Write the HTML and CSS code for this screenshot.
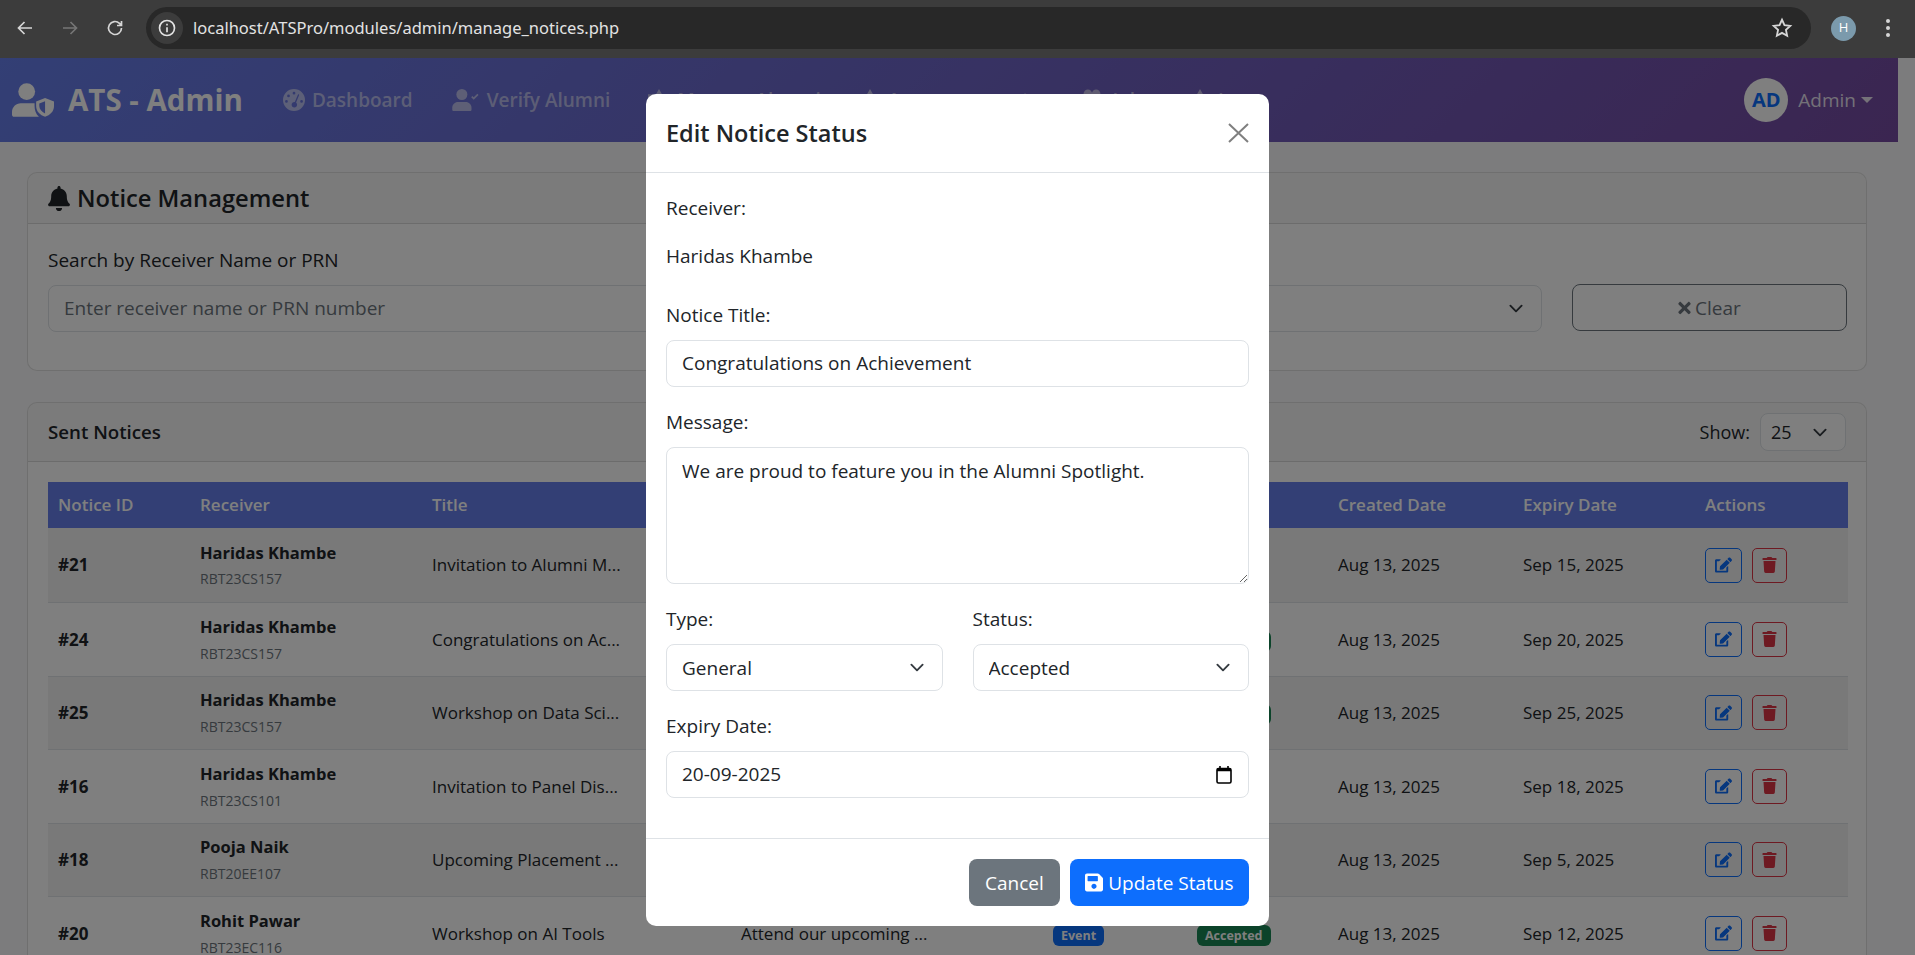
FILE: index.html
```html
<!DOCTYPE html>
<html lang="en">
<head>
  <meta charset="UTF-8">
  <title>Manage Notices - ATS Admin</title>
  <link rel="stylesheet" href="styles.css">
</head>
<body>
  <svg class="sprite" aria-hidden="true">
    <symbol id="i-bell" viewBox="0 0 448 512"><path d="M224 512c35.32 0 63.97-28.65 63.97-64H160.03c0 35.35 28.65 64 63.97 64zm215.39-149.71c-19.32-20.76-55.47-51.99-55.47-154.29 0-77.7-54.48-139.9-127.94-155.16V32c0-17.67-14.32-32-31.98-32s-31.98 14.33-31.98 32v20.84C118.56 68.1 64.08 130.3 64.08 208c0 102.3-36.15 133.53-55.47 154.29-6 6.45-8.66 14.16-8.61 21.71.11 16.4 12.98 32 32.1 32h383.8c19.12 0 32-15.6 32.1-32 .05-7.55-2.61-15.27-8.61-21.71z"/></symbol>
    <symbol id="i-trash" viewBox="0 0 448 512"><path d="M432 32H312l-9.4-18.7A24 24 0 0 0 281.1 0H166.8a23.72 23.72 0 0 0-21.4 13.3L136 32H16A16 16 0 0 0 0 48v32a16 16 0 0 0 16 16h416a16 16 0 0 0 16-16V48a16 16 0 0 0-16-16zM53.2 467a48 48 0 0 0 47.9 45h245.8a48 48 0 0 0 47.9-45L416 128H32z"/></symbol>
    <symbol id="i-edit" viewBox="0 0 576 512"><path d="M402.6 83.2l90.2 90.2c3.8 3.8 3.8 10 0 13.8L274.4 405.6l-92.8 10.3c-12.4 1.4-22.9-9.1-21.5-21.5l10.3-92.8L388.8 83.2c3.8-3.8 10-3.8 13.8 0zm162-22.9l-48.8-48.8c-15.2-15.2-39.9-15.2-55.2 0l-35.4 35.4c-3.8 3.8-3.8 10 0 13.8l90.2 90.2c3.8 3.8 10 3.8 13.8 0l35.4-35.4c15.2-15.3 15.2-40 0-55.2zM384 346.2V448H64V128h73.1c3.2 0 6.2-1.3 8.5-3.5l40-40c7.6-7.6 2.2-20.5-8.5-20.5H48C21.5 64 0 85.5 0 112v352c0 26.5 21.5 48 48 48h352c26.5 0 48-21.5 48-48V306.2c0-10.7-12.9-16-20.5-8.5l-40 40c-2.2 2.3-3.5 5.3-3.5 8.5z"/></symbol>
    <symbol id="i-save" viewBox="0 0 448 512"><path d="M433.941 129.941l-83.882-83.882A48 48 0 0 0 316.118 32H48C21.49 32 0 53.49 0 80v352c0 26.51 21.49 48 48 48h352c26.51 0 48-21.49 48-48V163.882a48 48 0 0 0-14.059-33.941zM224 416c-35.346 0-64-28.654-64-64 0-35.346 28.654-64 64-64s64 28.654 64 64c0 35.346-28.654 64-64 64zm96-304.52V212c0 6.627-5.373 12-12 12H76c-6.627 0-12-5.373-12-12V108c0-6.627 5.373-12 12-12h228.52c3.183 0 6.235 1.264 8.485 3.515l3.48 3.48A11.996 11.996 0 0 1 320 111.48z"/></symbol>
    <symbol id="i-times" viewBox="0 0 352 512"><path d="M242.72 256l100.07-100.07c12.28-12.28 12.28-32.19 0-44.48l-22.24-22.24c-12.28-12.28-32.19-12.28-44.48 0L176 189.28 75.93 89.21c-12.28-12.28-32.19-12.28-44.48 0L9.21 111.45c-12.28 12.28-12.28 32.19 0 44.48L109.28 256 9.21 356.07c-12.28 12.28-12.28 32.19 0 44.48l22.24 22.24c12.28 12.28 32.2 12.28 44.48 0L176 322.72l100.07 100.07c12.28 12.28 32.2 12.28 44.48 0l22.24-22.24c12.28-12.28 12.28-32.19 0-44.48L242.72 256z"/></symbol>
    <symbol id="i-gauge" viewBox="0 0 512 512"><path fill-rule="evenodd" d="M256 0a256 256 0 1 0 0 512 256 256 0 0 0 0-512zm0 64a32 32 0 1 1 0 64 32 32 0 0 1 0-64zM128 128a32 32 0 1 1 0 64 32 32 0 0 1 0-64zM80 256a32 32 0 1 1 0 64 32 32 0 0 1 0-64zm352 0a32 32 0 1 1 0 64 32 32 0 0 1 0-64zM361 115c12 5 18 19 13 31l-70 170c14 12 24 30 24 52 0 36-29 64-64 64s-64-28-64-64 29-64 64-64c4 0 7 0 10 1l70-168c5-12 19-18 31-13z"/></symbol>
    <symbol id="i-user-shield" viewBox="0 0 640 512"><circle cx="224" cy="128" r="128"/><path d="M134 304h180c10 0 20 1 30 3v40c0 60 18 120 66 165H32c-18 0-32-14-32-32v-42c0-74 60-134 134-134z"/><path fill-rule="evenodd" d="M504 224l136 54v70c0 84-60 140-136 164-76-24-136-80-136-164v-70zm0 50l-88 35v40c0 50 36 90 88 112z"/></symbol>
    <symbol id="i-user-check" viewBox="0 0 640 512"><circle cx="224" cy="128" r="128"/><path d="M134 304h180c74 0 134 60 134 134v42c0 18-14 32-32 32H32c-18 0-32-14-32-32v-42c0-74 60-134 134-134z"/><path d="M500 250l-60-60 28-28 32 32 84-84 28 28z"/></symbol>
    <symbol id="i-users" viewBox="0 0 512 512"><circle cx="160" cy="110" r="100"/><circle cx="352" cy="110" r="100"/><path d="M0 480c0-120 70-200 160-200s160 80 160 200zm340-200c100 0 172 80 172 200H360c0-80-20-150-60-190z"/></symbol>
    <symbol id="i-peak" viewBox="0 0 512 512"><path d="M256 0l70 120h186v392H0V120h186z"/></symbol>
  </svg>

  <header class="browser-bar">
    <svg class="tool-icon" viewBox="0 0 24 24"><path d="M19 12H6M11.500 6l-6 6 6 6"/></svg>
    <svg class="tool-icon tool-off" viewBox="0 0 24 24"><path d="M5 12h13M12.500 6l6 6-6 6"/></svg>
    <svg class="tool-icon" viewBox="0 0 24 24"><path d="M18.500 12a6.500 6.500 0 1 1-2-4.700L18.500 9.300M18.500 5v4.500H14"/></svg>
    <div class="omnibox">
      <span class="site-info">
        <svg viewBox="0 0 24 24"><circle cx="12" cy="12" r="9"/><path d="M12 11v6M12 7v2"/></svg>
      </span>
      <span class="url">localhost/ATSPro/modules/admin/manage_notices.php</span>
      <svg class="star" viewBox="0 0 24 24"><path d="M12 3l2.700 6 6.300.7-4.700 4.300 1.300 6.500L12 17.300l-5.600 3.200 1.300-6.500L3 9.700l6.300-.7z"/></svg>
    </div>
    <span class="profile-dot">H</span>
    <span class="menu-dots"><i></i><i></i><i></i></span>
  </header>

  <div class="viewport">
    <div class="page">
      <nav class="navbar">
        <a class="brand" href="#"><svg class="brand-icon"><use href="#i-user-shield"/></svg>ATS - Admin</a>
        <ul class="nav-links">
          <li><svg class="nav-icon"><use href="#i-gauge"/></svg>Dashboard</li>
          <li><svg class="nav-icon nav-icon-wide"><use href="#i-user-check"/></svg>Verify Alumni</li>
          <li><svg class="nav-icon"><use href="#i-peak"/></svg>Manage Alumni</li>
          <li><svg class="nav-icon"><use href="#i-peak"/></svg>Announcements</li>
          <li><svg class="nav-icon nav-icon-wide"><use href="#i-users"/></svg>Jobs</li>
          <li><svg class="nav-icon"><use href="#i-peak"/></svg>Logs</li>
        </ul>
        <div class="nav-user">
          <span class="avatar">AD</span>
          <span class="user-name">Admin</span>
          <span class="caret"></span>
        </div>
      </nav>

      <main class="content">
        <section class="card filter-card">
          <div class="card-head">
            <h4 class="card-title"><svg class="bell"><use href="#i-bell"/></svg>Notice Management</h4>
          </div>
          <div class="filter-body">
            <div class="filter-col">
              <label class="field-label">Search by Receiver Name or PRN</label>
              <input class="control" type="text" placeholder="Enter receiver name or PRN number">
            </div>
            <div class="filter-col">
              <label class="field-label">Filter by Status</label>
              <select class="control"><option></option></select>
            </div>
            <div class="filter-clear">
              <button class="btn-clear" type="button"><svg><use href="#i-times"/></svg>Clear</button>
            </div>
          </div>
        </section>

        <section class="card notices-card">
          <div class="card-head notices-head">
            <h5 class="sub-title">Sent Notices</h5>
            <div class="show-box">
              <span>Show:</span>
              <select class="control control-small"><option>25</option></select>
            </div>
          </div>
          <div class="notices-body">
            <table class="notices">
              <colgroup>
                <col class="c-id"><col class="c-receiver"><col class="c-title"><col class="c-message">
                <col class="c-type"><col class="c-status"><col class="c-created"><col class="c-expiry"><col class="c-actions">
              </colgroup>
              <thead>
                <tr>
                  <th>Notice ID</th><th>Receiver</th><th>Title</th><th>Message</th><th>Type</th>
                  <th>Status</th><th>Created Date</th><th>Expiry Date</th><th>Actions</th>
                </tr>
              </thead>
              <tbody>
                <tr>
                  <td class="id">#21</td>
                  <td><b class="name">Haridas Khambe</b><small class="prn">RBT23CS157</small></td>
                  <td>Invitation to Alumni M...</td>
                  <td>You are invited to our ...</td>
                  <td><span class="badge b-event">Event</span></td>
                  <td><span class="badge b-read">Read</span></td>
                  <td>Aug 13, 2025</td><td>Sep 15, 2025</td>
                  <td class="actions"><button class="act act-edit"><svg><use href="#i-edit"/></svg></button><button class="act act-del"><svg><use href="#i-trash"/></svg></button></td>
                </tr>
                <tr>
                  <td class="id">#24</td>
                  <td><b class="name">Haridas Khambe</b><small class="prn">RBT23CS157</small></td>
                  <td>Congratulations on Ac...</td>
                  <td>We are proud to featu...</td>
                  <td><span class="badge b-event">General</span></td>
                  <td><span class="badge b-accepted">Accepted</span></td>
                  <td>Aug 13, 2025</td><td>Sep 20, 2025</td>
                  <td class="actions"><button class="act act-edit"><svg><use href="#i-edit"/></svg></button><button class="act act-del"><svg><use href="#i-trash"/></svg></button></td>
                </tr>
                <tr>
                  <td class="id">#25</td>
                  <td><b class="name">Haridas Khambe</b><small class="prn">RBT23CS157</small></td>
                  <td>Workshop on Data Sci...</td>
                  <td>Join our upcoming wo...</td>
                  <td><span class="badge b-event">Event</span></td>
                  <td><span class="badge b-accepted">Accepted</span></td>
                  <td>Aug 13, 2025</td><td>Sep 25, 2025</td>
                  <td class="actions"><button class="act act-edit"><svg><use href="#i-edit"/></svg></button><button class="act act-del"><svg><use href="#i-trash"/></svg></button></td>
                </tr>
                <tr>
                  <td class="id">#16</td>
                  <td><b class="name">Haridas Khambe</b><small class="prn">RBT23CS101</small></td>
                  <td>Invitation to Panel Dis...</td>
                  <td>We invite you to a pan...</td>
                  <td><span class="badge b-event">Event</span></td>
                  <td><span class="badge b-read">Read</span></td>
                  <td>Aug 13, 2025</td><td>Sep 18, 2025</td>
                  <td class="actions"><button class="act act-edit"><svg><use href="#i-edit"/></svg></button><button class="act act-del"><svg><use href="#i-trash"/></svg></button></td>
                </tr>
                <tr>
                  <td class="id">#18</td>
                  <td><b class="name">Pooja Naik</b><small class="prn">RBT20EE107</small></td>
                  <td>Upcoming Placement ...</td>
                  <td>Placement drive for fi...</td>
                  <td><span class="badge b-event">Event</span></td>
                  <td><span class="badge b-read">Sent</span></td>
                  <td>Aug 13, 2025</td><td>Sep 5, 2025</td>
                  <td class="actions"><button class="act act-edit"><svg><use href="#i-edit"/></svg></button><button class="act act-del"><svg><use href="#i-trash"/></svg></button></td>
                </tr>
                <tr>
                  <td class="id">#20</td>
                  <td><b class="name">Rohit Pawar</b><small class="prn">RBT23EC116</small></td>
                  <td>Workshop on AI Tools</td>
                  <td>Attend our upcoming ...</td>
                  <td><span class="badge b-event">Event</span></td>
                  <td><span class="badge b-accepted">Accepted</span></td>
                  <td>Aug 13, 2025</td><td>Sep 12, 2025</td>
                  <td class="actions"><button class="act act-edit"><svg><use href="#i-edit"/></svg></button><button class="act act-del"><svg><use href="#i-trash"/></svg></button></td>
                </tr>
              </tbody>
            </table>
          </div>
        </section>
      </main>
    </div>

    <div class="backdrop">
      <div class="modal">
        <div class="modal-head">
          <h5 class="modal-title">Edit Notice Status</h5>
          <svg class="modal-close" viewBox="0 0 21 20"><path d="M1 1l19 18M20 1L1 19"/></svg>
        </div>
        <form class="modal-body">
          <div class="group">
            <label class="field-label">Receiver:</label>
            <p class="plain-value">Haridas Khambe</p>
          </div>
          <div class="group">
            <label class="field-label">Notice Title:</label>
            <input class="control" type="text" value="Congratulations on Achievement">
          </div>
          <div class="group">
            <label class="field-label">Message:</label>
            <textarea class="control control-area">We are proud to feature you in the Alumni Spotlight.</textarea>
          </div>
          <div class="group group-split">
            <div class="split-col">
              <label class="field-label">Type:</label>
              <select class="control"><option>General</option></select>
            </div>
            <div class="split-col">
              <label class="field-label">Status:</label>
              <select class="control"><option>Accepted</option></select>
            </div>
          </div>
          <div class="group">
            <label class="field-label">Expiry Date:</label>
            <div class="control date-box">
              <input class="date-text" type="text" value="20-09-2025">
              <svg class="calendar" viewBox="0 0 16 18"><path d="M4 0v3M12 0v3"/><rect x="1" y="2.500" width="14" height="14.500" rx="1.500"/><path class="calendar-top" d="M1 4h14"/></svg>
            </div>
          </div>
        </form>
        <div class="modal-foot">
          <button class="btn btn-cancel" type="button">Cancel</button>
          <button class="btn btn-update" type="button"><svg><use href="#i-save"/></svg>Update Status</button>
        </div>
      </div>
    </div>
  </div>
</body>
</html>
```

FILE: styles.css
```css
* {
  box-sizing: border-box;
}

html, body {
  margin: 0;
  height: 955px;
  overflow: hidden;
}

body {
  font-family: "Open Sans", "Noto Sans", Arial, sans-serif;
  font-size: 19px;
  line-height: 1.5;
  color: #212529;
  background-color: #f8f9fa;
}

.sprite {
  display: none;
}

/* browser toolbar */
.browser-bar {
  height: 58px;
  padding: 7px 0 9px 13px;
  display: flex;
  align-items: center;
  background-color: #3c3c3c;
}

.tool-icon {
  width: 24px;
  height: 24px;
  margin-right: 21px;
  flex: none;
  fill: none;
  stroke: #d6d6d6;
  stroke-width: 1.7;
}

.tool-off {
  stroke: #757575;
}

.omnibox {
  width: 1665px;
  height: 42px;
  margin-left: -2px;
  padding: 0 18px 0 5px;
  display: flex;
  align-items: center;
  border-radius: 21px;
  background-color: #282828;
}

.site-info {
  width: 32px;
  height: 32px;
  display: flex;
  align-items: center;
  justify-content: center;
  border-radius: 50%;
  background-color: #3c3c3c;
}

.site-info svg {
  width: 20px;
  height: 20px;
  fill: none;
  stroke: #e3e3e3;
  stroke-width: 2;
}

.url {
  margin-left: 10px;
  flex: 1;
  font-family: "Noto Sans", sans-serif;
  font-size: 16.500px;
  color: #e3e3e3;
}

.star {
  width: 22px;
  height: 22px;
  fill: none;
  stroke: #d6d6d6;
  stroke-width: 2;
}

.profile-dot {
  width: 25px;
  height: 25px;
  margin-left: 20px;
  display: flex;
  align-items: center;
  justify-content: center;
  border-radius: 50%;
  font-size: 13px;
  color: #fff;
  background-color: #7b9aac;
}

.menu-dots {
  margin-left: 30px;
  display: flex;
  flex-direction: column;
  gap: 3px;
}

.menu-dots i {
  width: 4px;
  height: 4px;
  border-radius: 50%;
  background-color: #d6d6d6;
}

/* page under the dialog */
.viewport {
  position: relative;
  height: 897px;
  overflow: hidden;
}

.page {
  width: 1898px;
}

.navbar {
  height: 84px;
  padding: 0 25px 0 12px;
  display: flex;
  align-items: center;
  background: linear-gradient(135deg, #667eea 0%, #764ba2 100%);
  color: #fff;
}

.brand {
  display: flex;
  align-items: center;
  font-size: 29.500px;
  font-weight: 700;
  color: #fff;
  text-decoration: none;
}

.brand-icon {
  width: 42px;
  height: 34px;
  margin-right: 14px;
  fill: #fff;
}

.nav-links {
  margin: 0 0 0 40px;
  padding: 0;
  list-style: none;
  display: flex;
  gap: 38px;
  font-size: 19px;
  font-weight: 600;
  color: rgba(255, 255, 255, 0.55);
}

.nav-links li {
  display: flex;
  align-items: center;
  white-space: nowrap;
}

.nav-icon {
  width: 22px;
  height: 22px;
  margin-right: 7px;
  fill: rgba(255, 255, 255, 0.55);
}

.nav-icon-wide {
  width: 30px;
  margin-right: 6px;
}

.nav-user {
  margin-left: auto;
  display: flex;
  align-items: center;
}

.avatar {
  width: 44px;
  height: 44px;
  margin-right: 10px;
  display: flex;
  align-items: center;
  justify-content: center;
  border-radius: 50%;
  font-size: 20px;
  font-weight: 700;
  color: #0d6efd;
  background-color: #fff;
}

.user-name {
  font-size: 19px;
  color: rgba(255, 255, 255, 0.85);
}

.caret {
  margin-left: 5px;
  border-top: 6px solid rgba(255, 255, 255, 0.85);
  border-left: 6px solid transparent;
  border-right: 6px solid transparent;
}

.content {
  padding: 30px 31px 0 27px;
}

.card {
  border: 1px solid rgba(0, 0, 0, 0.125);
  border-radius: 10px;
  background-color: #fff;
}

.filter-card {
  height: 199px;
  margin-bottom: 31px;
}

.card-head {
  height: 51px;
  padding: 0 20px;
  display: flex;
  align-items: center;
  border-bottom: 1px solid rgba(0, 0, 0, 0.125);
  border-radius: 9px 9px 0 0;
  background-color: rgba(0, 0, 0, 0.03);
}

.card-title {
  margin: 0;
  padding-top: 2px;
  display: flex;
  align-items: center;
  font-size: 23.700px;
  font-weight: 600;
}

.bell {
  width: 22px;
  height: 25px;
  margin-right: 7px;
  fill: #212529;
}

.filter-body {
  padding: 22px 20px 0;
  display: grid;
  grid-template-columns: 748px 716px 275px;
  gap: 30px;
}

.filter-col {
  min-width: 0;
}

.filter-clear {
  padding-top: 38px;
}

.field-label {
  height: 29px;
  margin-bottom: 10px;
  display: block;
  font-size: 19px;
  line-height: 29px;
  white-space: nowrap;
}

.control {
  width: 100%;
  height: 47px;
  padding: 0 15px;
  display: block;
  border: 1px solid #dee2e6;
  border-radius: 8px;
  font-family: inherit;
  font-size: 19px;
  color: #212529;
  background-color: #fff;
}

input.control {
  padding-bottom: 2px;
}

.control::placeholder {
  color: #6c757d;
}

select.control {
  appearance: none;
  background-image: url("data:image/svg+xml,%3csvg xmlns='http://www.w3.org/2000/svg' viewBox='0 0 16 16'%3e%3cpath fill='none' stroke='%23343a40' stroke-linecap='round' stroke-linejoin='round' stroke-width='2' d='m2 5 6 6 6-6'/%3e%3c/svg%3e");
  background-repeat: no-repeat;
  background-position: right 15px center;
  background-size: 20px 15px;
}

.btn-clear {
  width: 275px;
  height: 47px;
  display: flex;
  align-items: center;
  justify-content: center;
  border: 1px solid #6c757d;
  border-radius: 8px;
  font-family: inherit;
  font-size: 19px;
  color: #6c757d;
  background: none;
}

.btn-clear svg {
  width: 13px;
  height: 18px;
  margin-right: 4px;
  fill: #6c757d;
}

/* notices table */
.notices-head {
  height: 59px;
  justify-content: space-between;
}

.sub-title {
  margin: 0;
  font-size: 18.700px;
  font-weight: 600;
}

.show-box {
  display: flex;
  align-items: center;
  gap: 10px;
  font-size: 18px;
}

.control-small {
  width: 86px;
  height: 38px;
  padding: 0 10px;
  font-size: 18px;
}

.notices-body {
  padding: 20px;
}

.notices {
  width: 1800px;
  table-layout: fixed;
  border-collapse: collapse;
  font-size: 17px;
}

.c-id { width: 142px; }
.c-receiver { width: 232px; }
.c-title { width: 309px; }
.c-message { width: 312px; }
.c-type { width: 144px; }
.c-status { width: 141px; }
.c-created { width: 185px; }
.c-expiry { width: 182px; }
.c-actions { width: 153px; }

.notices th {
  height: 46px;
  padding: 0 10px;
  text-align: left;
  font-weight: 600;
  color: #fff;
  background-color: #667eea;
  white-space: nowrap;
}

.notices td {
  height: 73.500px;
  padding: 0 10px;
  border-bottom: 1px solid #dee2e6;
  white-space: nowrap;
  overflow: hidden;
}

.notices tbody tr:first-child td {
  height: 74.500px;
}

.notices tbody tr:nth-child(odd) td {
  background-color: rgba(0, 0, 0, 0.05);
}

.id {
  font-weight: 700;
}

.name {
  display: block;
  font-size: 16.500px;
  font-weight: 700;
}

.prn {
  display: block;
  margin-top: 3px;
  font-size: 14px;
  color: #6c757d;
}

.badge {
  padding: 2px 8px;
  border-radius: 6px;
  font-size: 12.500px;
  font-weight: 700;
  color: #fff;
}

.b-event { background-color: #0d6efd; }
.b-read { background-color: #6c757d; }
.b-accepted { background-color: #198754; }

.actions {
  font-size: 0;
}

.act {
  width: 37px;
  height: 35px;
  margin-right: 10px;
  padding: 0;
  border: 1px solid;
  border-radius: 5px;
  vertical-align: middle;
  background: none;
}

.act svg {
  width: 17px;
  height: 16px;
  fill: currentColor;
  vertical-align: middle;
}

.act-edit { color: #0d6efd; }
.act-del { width: 35px; color: #dc3545; }

/* dialog */
.backdrop {
  position: absolute;
  inset: 0;
  background-color: rgba(0, 0, 0, 0.5);
}

.modal {
  position: absolute;
  top: 36px;
  left: 646px;
  width: 623px;
  height: 832px;
  border-radius: 10px;
  background-color: #fff;
}

.modal-head {
  height: 79px;
  padding: 0 20px;
  display: flex;
  align-items: center;
  justify-content: space-between;
  border-bottom: 1px solid #dee2e6;
}

.modal-title {
  margin: 0;
  padding-top: 1px;
  font-size: 23.500px;
  font-weight: 600;
}

.modal-close {
  width: 21px;
  height: 20px;
  margin-top: -1px;
  fill: none;
  stroke: #000;
  stroke-opacity: 0.5;
  stroke-width: 2;
}

.modal-body {
  height: 665px;
  padding: 21px 20px 0;
}

.group {
  margin-bottom: 21px;
}

.plain-value {
  height: 47px;
  margin: 0;
  line-height: 47px;
}

.control-area {
  height: 137px;
  padding: 10px 15px;
  resize: vertical;
}

.group-split {
  display: flex;
  gap: 30px;
}

.split-col {
  flex: 1;
}

.date-box {
  display: flex;
  align-items: center;
  justify-content: space-between;
}

.date-text {
  flex: 1;
  padding: 0 0 2px;
  border: none;
  outline: none;
  font-family: inherit;
  font-size: 19px;
  color: #212529;
}

.calendar {
  width: 16px;
  height: 18px;
  margin-right: 1px;
  fill: none;
  stroke: #000;
  stroke-width: 1.600;
}

.calendar-top {
  stroke-width: 2.500;
}

.modal-foot {
  height: 88px;
  padding: 0 20px;
  display: flex;
  align-items: center;
  justify-content: flex-end;
  gap: 10px;
  border-top: 1px solid #dee2e6;
}

.btn {
  height: 47px;
  padding: 0 15.500px;
  display: flex;
  align-items: center;
  border: none;
  border-radius: 8px;
  font-family: inherit;
  font-size: 19px;
  color: #fff;
}

.btn-cancel {
  padding: 0 16px;
  background-color: #6c757d;
}

.btn-update {
  background-color: #0d6efd;
}

.btn svg {
  width: 18px;
  height: 21px;
  margin-right: 5px;
  fill: #fff;
}
```
